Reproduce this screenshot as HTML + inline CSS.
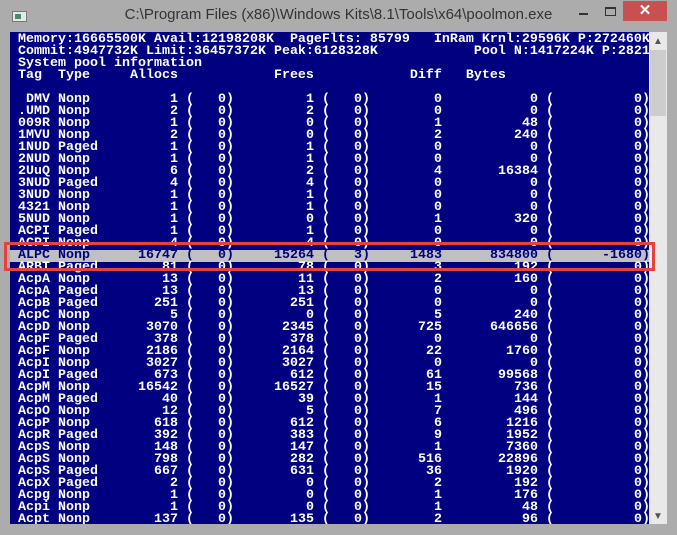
<!DOCTYPE html>
<html><head><meta charset="utf-8"><style>
*{margin:0;padding:0;box-sizing:border-box}
body{width:677px;height:535px;background:#acacac;position:relative;overflow:hidden;font-family:"Liberation Sans",sans-serif}
.title{position:absolute;left:0;top:6px;width:677px;text-align:center;font-size:15px;color:#333;}
.icon{position:absolute;left:12px;top:11px;width:15px;height:11px;background:#e8e8e8;border:1px solid #777}
.icon:after{content:"";position:absolute;left:2px;top:2px;width:6px;height:5px;background:#4a8a6a}
.min{position:absolute;left:579px;top:13px;width:9px;height:2px;background:#333}
.max{position:absolute;left:605px;top:7px;width:11px;height:9px;border:1px solid #333;border-top-width:2px}
.close{position:absolute;left:623px;top:1px;width:44px;height:20px;background:#c75050;color:#fff;font-size:15px;text-align:center;line-height:20px;font-weight:bold}
.con{position:absolute;left:10px;top:32px;width:639px;height:492px;background:#000080;overflow:hidden;padding-top:2px}
pre,.r{font-family:"Liberation Mono",monospace;font-weight:bold;font-size:13.33px;line-height:12px;color:#fff;white-space:pre;padding-left:8px;height:12px}
.r span{display:inline-block}
.t{width:40px}.y{width:48px}.a{width:72px;text-align:right}.f{width:80px;text-align:right}.d{width:72px;text-align:right}.b{width:96px;text-align:right}.l{width:88px;text-align:right}
.hl{background:#c0c0c0;color:#000080}
.red{position:absolute;left:4px;top:242px;width:651px;height:29px;border:3px solid #e8403c}
.sb{position:absolute;left:649px;top:32px;width:18px;height:492px;background:#e9e9e9}
.th{position:absolute;left:650px;top:50px;width:16px;height:66px;background:#cdcdcd}
.ar{position:absolute;left:653px;font-size:10px;color:#555}
</style></head><body>
<div class="icon"></div>
<div class="title">C:\Program Files (x86)\Windows Kits\8.1\Tools\x64\poolmon.exe</div>
<div class="min"></div><div class="max"></div><div class="close">✕</div>
<div class="con">
<pre>Memory:16665500K Avail:12198208K  PageFlts: 85799   InRam Krnl:29596K P:272460K</pre>
<pre>Commit:4947732K Limit:36457372K Peak:6128328K            Pool N:1417224K P:2821</pre>
<pre>System pool information</pre>
<pre>Tag  Type     Allocs            Frees            Diff   Bytes</pre>
<pre> </pre>
<div class="r"><span class="t"> DMV</span><span class="y">Nonp</span><span class="a">1</span> (   0)<span class="f">1</span> (   0)<span class="d">0</span><span class="b">0</span> (<span class="l">0</span>)</div>
<div class="r"><span class="t">.UMD</span><span class="y">Nonp</span><span class="a">2</span> (   0)<span class="f">2</span> (   0)<span class="d">0</span><span class="b">0</span> (<span class="l">0</span>)</div>
<div class="r"><span class="t">009R</span><span class="y">Nonp</span><span class="a">1</span> (   0)<span class="f">0</span> (   0)<span class="d">1</span><span class="b">48</span> (<span class="l">0</span>)</div>
<div class="r"><span class="t">1MVU</span><span class="y">Nonp</span><span class="a">2</span> (   0)<span class="f">0</span> (   0)<span class="d">2</span><span class="b">240</span> (<span class="l">0</span>)</div>
<div class="r"><span class="t">1NUD</span><span class="y">Paged</span><span class="a">1</span> (   0)<span class="f">1</span> (   0)<span class="d">0</span><span class="b">0</span> (<span class="l">0</span>)</div>
<div class="r"><span class="t">2NUD</span><span class="y">Nonp</span><span class="a">1</span> (   0)<span class="f">1</span> (   0)<span class="d">0</span><span class="b">0</span> (<span class="l">0</span>)</div>
<div class="r"><span class="t">2UuQ</span><span class="y">Nonp</span><span class="a">6</span> (   0)<span class="f">2</span> (   0)<span class="d">4</span><span class="b">16384</span> (<span class="l">0</span>)</div>
<div class="r"><span class="t">3NUD</span><span class="y">Paged</span><span class="a">4</span> (   0)<span class="f">4</span> (   0)<span class="d">0</span><span class="b">0</span> (<span class="l">0</span>)</div>
<div class="r"><span class="t">3NUD</span><span class="y">Nonp</span><span class="a">1</span> (   0)<span class="f">1</span> (   0)<span class="d">0</span><span class="b">0</span> (<span class="l">0</span>)</div>
<div class="r"><span class="t">4321</span><span class="y">Nonp</span><span class="a">1</span> (   0)<span class="f">1</span> (   0)<span class="d">0</span><span class="b">0</span> (<span class="l">0</span>)</div>
<div class="r"><span class="t">5NUD</span><span class="y">Nonp</span><span class="a">1</span> (   0)<span class="f">0</span> (   0)<span class="d">1</span><span class="b">320</span> (<span class="l">0</span>)</div>
<div class="r"><span class="t">ACPI</span><span class="y">Paged</span><span class="a">1</span> (   0)<span class="f">1</span> (   0)<span class="d">0</span><span class="b">0</span> (<span class="l">0</span>)</div>
<div class="r"><span class="t">ACPI</span><span class="y">Nonp</span><span class="a">4</span> (   0)<span class="f">4</span> (   0)<span class="d">0</span><span class="b">0</span> (<span class="l">0</span>)</div>
<div class="r hl"><span class="t">ALPC</span><span class="y">Nonp</span><span class="a">16747</span> (   0)<span class="f">15264</span> (   3)<span class="d">1483</span><span class="b">834800</span> (<span class="l">-1680</span>)</div>
<div class="r"><span class="t">ARBT</span><span class="y">Paged</span><span class="a">81</span> (   0)<span class="f">78</span> (   0)<span class="d">3</span><span class="b">192</span> (<span class="l">0</span>)</div>
<div class="r"><span class="t">AcpA</span><span class="y">Nonp</span><span class="a">13</span> (   0)<span class="f">11</span> (   0)<span class="d">2</span><span class="b">160</span> (<span class="l">0</span>)</div>
<div class="r"><span class="t">AcpA</span><span class="y">Paged</span><span class="a">13</span> (   0)<span class="f">13</span> (   0)<span class="d">0</span><span class="b">0</span> (<span class="l">0</span>)</div>
<div class="r"><span class="t">AcpB</span><span class="y">Paged</span><span class="a">251</span> (   0)<span class="f">251</span> (   0)<span class="d">0</span><span class="b">0</span> (<span class="l">0</span>)</div>
<div class="r"><span class="t">AcpC</span><span class="y">Nonp</span><span class="a">5</span> (   0)<span class="f">0</span> (   0)<span class="d">5</span><span class="b">240</span> (<span class="l">0</span>)</div>
<div class="r"><span class="t">AcpD</span><span class="y">Nonp</span><span class="a">3070</span> (   0)<span class="f">2345</span> (   0)<span class="d">725</span><span class="b">646656</span> (<span class="l">0</span>)</div>
<div class="r"><span class="t">AcpF</span><span class="y">Paged</span><span class="a">378</span> (   0)<span class="f">378</span> (   0)<span class="d">0</span><span class="b">0</span> (<span class="l">0</span>)</div>
<div class="r"><span class="t">AcpF</span><span class="y">Nonp</span><span class="a">2186</span> (   0)<span class="f">2164</span> (   0)<span class="d">22</span><span class="b">1760</span> (<span class="l">0</span>)</div>
<div class="r"><span class="t">AcpI</span><span class="y">Nonp</span><span class="a">3027</span> (   0)<span class="f">3027</span> (   0)<span class="d">0</span><span class="b">0</span> (<span class="l">0</span>)</div>
<div class="r"><span class="t">AcpI</span><span class="y">Paged</span><span class="a">673</span> (   0)<span class="f">612</span> (   0)<span class="d">61</span><span class="b">99568</span> (<span class="l">0</span>)</div>
<div class="r"><span class="t">AcpM</span><span class="y">Nonp</span><span class="a">16542</span> (   0)<span class="f">16527</span> (   0)<span class="d">15</span><span class="b">736</span> (<span class="l">0</span>)</div>
<div class="r"><span class="t">AcpM</span><span class="y">Paged</span><span class="a">40</span> (   0)<span class="f">39</span> (   0)<span class="d">1</span><span class="b">144</span> (<span class="l">0</span>)</div>
<div class="r"><span class="t">AcpO</span><span class="y">Nonp</span><span class="a">12</span> (   0)<span class="f">5</span> (   0)<span class="d">7</span><span class="b">496</span> (<span class="l">0</span>)</div>
<div class="r"><span class="t">AcpP</span><span class="y">Nonp</span><span class="a">618</span> (   0)<span class="f">612</span> (   0)<span class="d">6</span><span class="b">1216</span> (<span class="l">0</span>)</div>
<div class="r"><span class="t">AcpR</span><span class="y">Paged</span><span class="a">392</span> (   0)<span class="f">383</span> (   0)<span class="d">9</span><span class="b">1952</span> (<span class="l">0</span>)</div>
<div class="r"><span class="t">AcpS</span><span class="y">Nonp</span><span class="a">148</span> (   0)<span class="f">147</span> (   0)<span class="d">1</span><span class="b">7360</span> (<span class="l">0</span>)</div>
<div class="r"><span class="t">AcpS</span><span class="y">Nonp</span><span class="a">798</span> (   0)<span class="f">282</span> (   0)<span class="d">516</span><span class="b">22896</span> (<span class="l">0</span>)</div>
<div class="r"><span class="t">AcpS</span><span class="y">Paged</span><span class="a">667</span> (   0)<span class="f">631</span> (   0)<span class="d">36</span><span class="b">1920</span> (<span class="l">0</span>)</div>
<div class="r"><span class="t">AcpX</span><span class="y">Paged</span><span class="a">2</span> (   0)<span class="f">0</span> (   0)<span class="d">2</span><span class="b">192</span> (<span class="l">0</span>)</div>
<div class="r"><span class="t">Acpg</span><span class="y">Nonp</span><span class="a">1</span> (   0)<span class="f">0</span> (   0)<span class="d">1</span><span class="b">176</span> (<span class="l">0</span>)</div>
<div class="r"><span class="t">Acpi</span><span class="y">Nonp</span><span class="a">1</span> (   0)<span class="f">0</span> (   0)<span class="d">1</span><span class="b">48</span> (<span class="l">0</span>)</div>
<div class="r"><span class="t">Acpt</span><span class="y">Nonp</span><span class="a">137</span> (   0)<span class="f">135</span> (   0)<span class="d">2</span><span class="b">96</span> (<span class="l">0</span>)</div>
</div>
<div class="sb"></div><div class="th"></div>
<div class="ar" style="top:36px">▲</div><div class="ar" style="top:511px">▼</div>
<div class="red"></div>
</body></html>
